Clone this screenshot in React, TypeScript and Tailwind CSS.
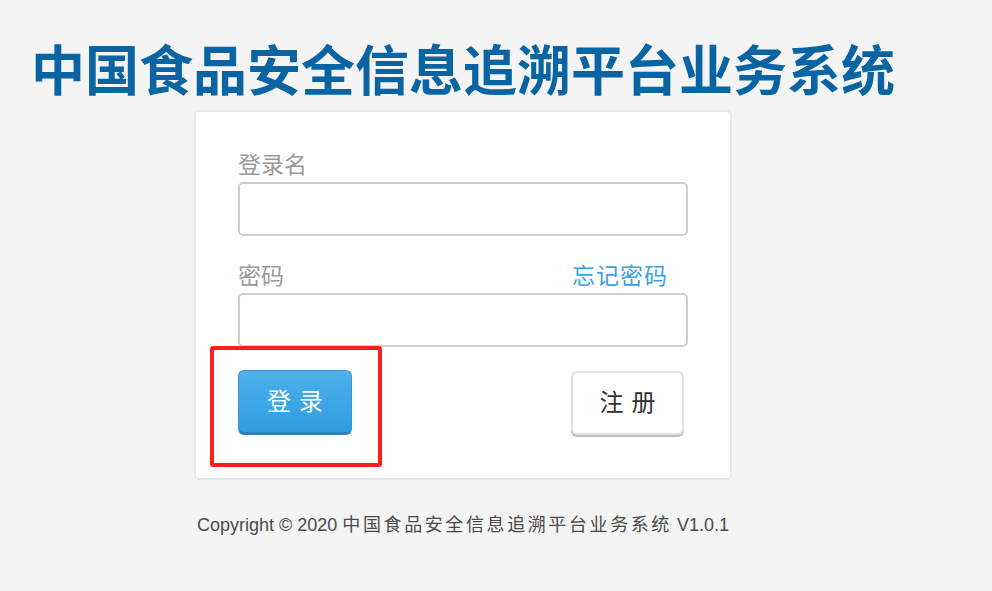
export default function App() {
  const font = "font-['Liberation_Sans','Noto_Sans_CJK_SC',sans-serif]";
  return (
    <div className={`min-h-[591px] w-full bg-[#f4f4f4] ${font}`}>
      <div className="flex w-[926px] flex-col items-center pt-[38px]">
        <h1 className="text-[54px] font-bold leading-[60px] text-[#0864a2] font-['Noto_Sans_CJK_SC',sans-serif]">
          中国食品安全信息追溯平台业务系统
        </h1>

        <div className="relative mt-[12px] h-[370px] w-[538px] rounded-[5px] border-2 border-[#e8e8e8] bg-white px-[42px] pt-[36px]">
          <label className="block text-[23px] leading-[34px] text-[#9a9a9a]">登录名</label>
          <input
            type="text"
            className="block h-[54px] w-[450px] rounded-[5px] border-2 border-[#cfcfcf] bg-white px-3 text-lg outline-none"
          />

          <div className="mt-[23px] flex w-[450px] items-center justify-between pr-[20px]">
            <label className="text-[23px] leading-[34px] text-[#9a9a9a]">密码</label>
            <a className="text-[23px] leading-[34px] tracking-[1px] text-[#3aa3e2]">忘记密码</a>
          </div>
          <input
            type="password"
            className="block h-[54px] w-[450px] rounded-[5px] border-2 border-[#cfcfcf] bg-white px-3 text-lg outline-none"
          />

          <div className="mt-[23px] flex w-[446px] items-center justify-between">
            <button className="h-[65px] w-[114px] rounded-[6px] border border-[#3796d4] border-b-[3px] border-b-[#2a82bf] bg-gradient-to-b from-[#4cb0ea] to-[#2f9ee2] text-[24px] tracking-[8px] pl-[8px] text-white">
              登录
            </button>
            <button className="h-[64px] w-[113px] rounded-[6px] border-2 border-[#e2e2e2] bg-white text-[24px] tracking-[8px] pl-[8px] text-[#333] shadow-[0_2px_0_#bdbdbd]">
              注册
            </button>
          </div>

          {/* annotation box */}
          <div className="absolute left-[14px] top-[234px] h-[121px] w-[172px] rounded-[3px] border-[4px] border-[#ff1f1a]" />
        </div>

        <p className="mt-[32px] text-[18px] text-[#4a4a4a]">
          Copyright © 2020 <span className="tracking-[2.6px]">中国食品安全信息追溯平台业务系统</span> V1.0.1
        </p>
      </div>
    </div>
  );
}
